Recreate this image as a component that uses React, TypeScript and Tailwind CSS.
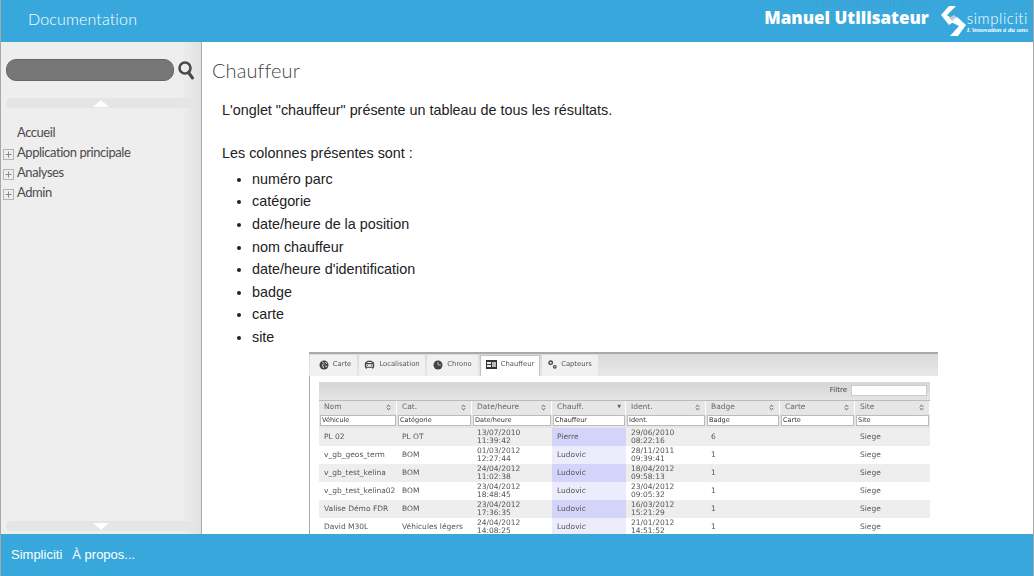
import React from 'react';
import { ChevronsUpDown, CarFront } from 'lucide-react';

const columns = [
  { label: 'Nom', filter: 'Véhicule' },
  { label: 'Cat.', filter: 'Catégorie' },
  { label: 'Date/heure', filter: 'Date/heure' },
  { label: 'Chauff.', filter: 'Chauffeur' },
  { label: 'Ident.', filter: 'Ident.' },
  { label: 'Badge', filter: 'Badge' },
  { label: 'Carte', filter: 'Carte' },
  { label: 'Site', filter: 'Site' },
];

const rows = [
  ['PL 02', 'PL OT', '13/07/2010', '11:39:42', 'Pierre', '29/06/2010', '08:22:16', '6'],
  ['v_gb_geos_term', 'BOM', '01/03/2012', '12:27:44', 'Ludovic', '28/11/2011', '09:39:41', '1'],
  ['v_gb_test_kelina', 'BOM', '24/04/2012', '11:02:38', 'Ludovic', '18/04/2012', '09:58:13', '1'],
  ['v_gb_test_kelina02', 'BOM', '23/04/2012', '18:48:45', 'Ludovic', '23/04/2012', '09:05:32', '1'],
  ['Valise Démo FDR', 'BOM', '23/04/2012', '17:36:35', 'Ludovic', '16/03/2012', '15:21:29', '1'],
  ['David M30L', 'Véhicules légers', '24/04/2012', '14:08:25', 'Ludovic', '21/01/2012', '14:51:52', '1'],
];

function GlobeIcon() {
  return (
    <svg width="10" height="10" viewBox="0 0 10 10">
      <circle cx="5" cy="5" r="4.5" fill="#444" />
      <path d="M3 1.5L5 3.5L3.5 5L4.5 8M6.5 2L8 4M6 6L8 6.5" stroke="#ddd" fill="none" />
    </svg>
  );
}

function ClockIcon() {
  return (
    <svg width="10" height="10" viewBox="0 0 10 10">
      <circle cx="5" cy="5" r="4.5" fill="#444" />
      <path d="M5 2V5H8" stroke="#bbb" fill="none" />
    </svg>
  );
}

function TableIcon() {
  return (
    <svg width="11" height="9" viewBox="0 0 11 9">
      <rect width="11" height="9" fill="#333" />
      <rect x="1" y="2" width="4" height="2" fill="#eee" />
      <rect x="1" y="5" width="4" height="2" fill="#eee" />
      <rect x="6" y="2" width="4" height="5" fill="#bbb" />
    </svg>
  );
}

function GearsIcon() {
  return (
    <svg width="9" height="9" viewBox="0 0 9 9">
      <circle cx="2.7" cy="2.7" r="1.7" fill="none" stroke="#444" strokeWidth="1.4" />
      <circle cx="6.8" cy="6.8" r="1.3" fill="none" stroke="#444" strokeWidth="1.2" />
    </svg>
  );
}

const tabs = [
  { label: 'Carte', icon: <GlobeIcon />, width: 'w-[47px]', pad: 'pl-[3px]' },
  { label: 'Localisation', icon: <CarFront size={11} strokeWidth={2.6} className="text-[#444]" />, width: 'w-[66px]', pad: '' },
  { label: 'Chrono', icon: <ClockIcon />, width: 'w-[51px]', pad: '' },
  { label: 'Chauffeur', icon: <TableIcon />, width: 'w-[60px]', pad: '' },
  { label: 'Capteurs', icon: <GearsIcon />, width: 'w-[56px]', pad: '' },
];

const bullets = ['numéro parc', 'catégorie', 'date/heure de la position', 'nom chauffeur', "date/heure d'identification", 'badge', 'carte', 'site'];

const gridCols = 'grid grid-cols-[78px_75px_80px_74px_80px_74px_75px_75px]';

function Logo() {
  return (
    <div className="flex items-center">
      <svg width="27" height="31" viewBox="0 0 27 31">
        <path d="M1 9L9 0H16L7 9L15 15L9 19Z" fill="#fff" />
        <path d="M9 12L14 9L20 14L15 18Z" fill="#c3ccd3" />
        <path d="M26 19L18 30H10L19 20L11 16L17 11Z" fill="#fff" />
      </svg>
      <div className="flex flex-col text-white">
        <span className="font-['Lato'] text-[15px] leading-[16px] font-light tracking-[0.55px]">simpliciti</span>
        <span className="font-['Liberation_Serif'] text-[6.5px] leading-[7px] font-bold whitespace-nowrap italic">L'innovation à du sens</span>
      </div>
    </div>
  );
}

function TreeItem({ label, expandable }: { label: string; expandable?: boolean }) {
  return (
    <div className="flex h-5 items-center">
      <div className="flex w-[16px] justify-start pl-[2px] pt-[3px]">
        {expandable && (
          <svg width="11" height="11" viewBox="0 0 11 11">
            <rect x="0.5" y="0.5" width="10" height="10" fill="none" stroke="#b5b5b5" />
            <path d="M2.5 5.5H8.5M5.5 2.5V8.5" stroke="#8a8a8a" />
          </svg>
        )}
      </div>
      <span className="font-['Lato'] text-[13px] tracking-[-0.45px] text-[#4f4a4e]">{label}</span>
    </div>
  );
}

function ScrollBar({ down }: { down?: boolean }) {
  return (
    <div className="ml-[5px] mr-[5px] flex h-[10px] justify-center rounded-[5px] bg-[#e5e5e5]">
      {down ? (
        <div className="mt-[2px] h-0 w-0 border-x-[8px] border-t-[7px] border-x-transparent border-t-white" />
      ) : (
        <div className="mt-[2px] h-0 w-0 border-x-[8px] border-b-[7px] border-x-transparent border-b-white" />
      )}
    </div>
  );
}

function AppShot() {
  return (
    <div className="ml-[107px] mt-[3px] w-[629px] font-['DejaVu_Sans'] text-[7.5px] text-[#555] blur-[0.3px]">
      <div className="flex h-[24px] items-end gap-[2px] border-t-2 border-[#aaa] bg-gradient-to-b from-[#dadada] to-[#e8e8e8] pl-[1px]">
        {tabs.map(t => (
          <div
            key={t.label}
            className={`flex h-[21px] ${t.width} ${t.pad} shrink-0 items-center justify-center gap-[4px] whitespace-nowrap border-x border-t pb-[2px] ${
              t.label === 'Chauffeur' ? 'border-[#c4c4c4] bg-white' : 'border-transparent bg-[#f1f1f1]'
            }`}
          >
            <span className="flex shrink-0 items-center">{t.icon}</span>
            <span className="text-[6.8px]">{t.label}</span>
          </div>
        ))}
      </div>
      <div className="border-l border-[#aaa] bg-white pl-[9px] pt-[6px]">
        <div className={`${gridCols} w-[611px]`}>
          <div className="col-span-8 flex h-[19px] items-center justify-end border-b border-[#bbb] bg-gradient-to-b from-[#d6d6d6] to-[#e4e4e4] pr-[3px]">
            <span className="mr-[4px] text-[7px] text-[#444]">Filtre</span>
            <div className="h-[11px] w-[76px] border border-[#ccc] bg-white" />
          </div>
          {columns.map((c, i) => (
            <div key={c.label} className="flex h-[13px] items-center justify-between border-r border-white bg-[#e6e6e6] pl-[5px] pr-[4px] text-[#666]">
              <span>{c.label}</span>
              {i === 3 ? <span className="text-[5px]">▼</span> : <ChevronsUpDown size={7} strokeWidth={3} className="text-[#444]" />}
            </div>
          ))}
          {columns.map(c => (
            <div key={c.filter} className="flex h-[14px] items-center bg-[#e6e6e6] px-[1px]">
              <div className="flex h-[11px] w-full items-center border border-[#bbb] bg-white pl-[1px] text-[6.5px] text-[#333]">{c.filter}</div>
            </div>
          ))}
          {rows.map((r, i) => {
            const odd = i % 2 === 0;
            const bg = odd ? 'bg-[#eeeeee]' : 'bg-white';
            return (
              <React.Fragment key={r[0]}>
                <div className={`${bg} flex h-[18px] items-center whitespace-nowrap pl-[5px]`}>{r[0]}</div>
                <div className={`${bg} flex h-[18px] items-center whitespace-nowrap pl-[5px]`}>{r[1]}</div>
                <div className={`${bg} flex h-[18px] flex-col justify-center pl-[5px] leading-[8px]`}>
                  <span>{r[2]}</span>
                  <span>{r[3]}</span>
                </div>
                <div className={`${odd ? 'bg-[#d4d4fb]' : 'bg-[#ececfc]'} flex h-[18px] items-center pl-[5px]`}>{r[4]}</div>
                <div className={`${bg} flex h-[18px] flex-col justify-center pl-[5px] leading-[8px]`}>
                  <span>{r[5]}</span>
                  <span>{r[6]}</span>
                </div>
                <div className={`${bg} flex h-[18px] items-center pl-[5px]`}>{r[7]}</div>
                <div className={`${bg} h-[18px]`} />
                <div className={`${bg} flex h-[18px] items-center pl-[5px]`}>Siege</div>
              </React.Fragment>
            );
          })}
        </div>
      </div>
    </div>
  );
}

export default function App() {
  return (
    <div className="flex h-[576px] w-[1034px] flex-col overflow-hidden border-x border-[#a8a8a8] bg-white">
      <header className="relative flex h-[42px] shrink-0 items-center justify-between bg-[#38a8dc] pl-[27px] pr-[5px] text-white">
        <span className="mb-[5px] font-['Lato'] text-[16px] font-light tracking-[0.15px]">Documentation</span>
        <div className="flex items-center gap-[11px]">
          <span className="mb-[6px] font-['Open_Sans'] text-[17px] leading-[18px] font-extrabold">Manuel Utilisateur</span>
          <Logo />
        </div>
        <span className="absolute right-[103px] top-0 font-['Liberation_Sans'] text-[12px] leading-[9px] tracking-[0.4px] text-[#3aa0d4]">contenu menu outils</span>
      </header>

      <div className="flex min-h-0 flex-1">
        <aside className="flex w-[201px] shrink-0 flex-col border-r border-[#a8a8a8] bg-gradient-to-r from-[#eeeeee] from-90% to-[#e2e2e2] pb-[3px] pt-[17px]">
          <div className="flex items-center pl-[5px]">
            <div className="h-[22px] w-[168px] rounded-[10px] border border-[#666] bg-[#777]" />
            <svg width="18" height="20" viewBox="0 0 18 20" className="ml-[3px]">
              <circle cx="8" cy="8" r="5.5" fill="none" stroke="#4a4a4a" strokeWidth="2.6" />
              <path d="M11.5 12.5L15.5 18" stroke="#4a4a4a" strokeWidth="3" strokeLinecap="round" />
            </svg>
          </div>
          <div className="mt-[17px]">
            <ScrollBar />
          </div>
          <div className="mt-[15px] flex-1">
            <TreeItem label="Accueil" />
            <TreeItem label="Application principale" expandable />
            <TreeItem label="Analyses" expandable />
            <TreeItem label="Admin" expandable />
          </div>
          <ScrollBar down />
        </aside>

        <main className="min-w-0 flex-1 overflow-hidden">
          <h1 className="mt-[14px] ml-[10px] font-['Lato'] text-[20px] leading-[28px] font-light tracking-[0.1px] text-[#444]">Chauffeur</h1>
          <div className="ml-[20px] mt-[15px] font-['Liberation_Sans'] text-[14.36px] leading-[22.6px] text-[#222]">
            <p>L'onglet "chauffeur" présente un tableau de tous les résultats.</p>
            <p className="mt-[20px]">Les colonnes présentes sont :</p>
            <ul className="mt-[3.6px] list-disc pl-[30px]">
              {bullets.map(b => (
                <li key={b}>{b}</li>
              ))}
            </ul>
          </div>
          <AppShot />
        </main>
      </div>

      <footer className="flex h-[42px] shrink-0 items-center gap-[10px] bg-[#38a8dc] pb-[1px] pl-[10px] font-['Liberation_Sans'] text-[13px] text-white">
        <span>Simpliciti</span>
        <span>À propos...</span>
      </footer>
    </div>
  );
}
